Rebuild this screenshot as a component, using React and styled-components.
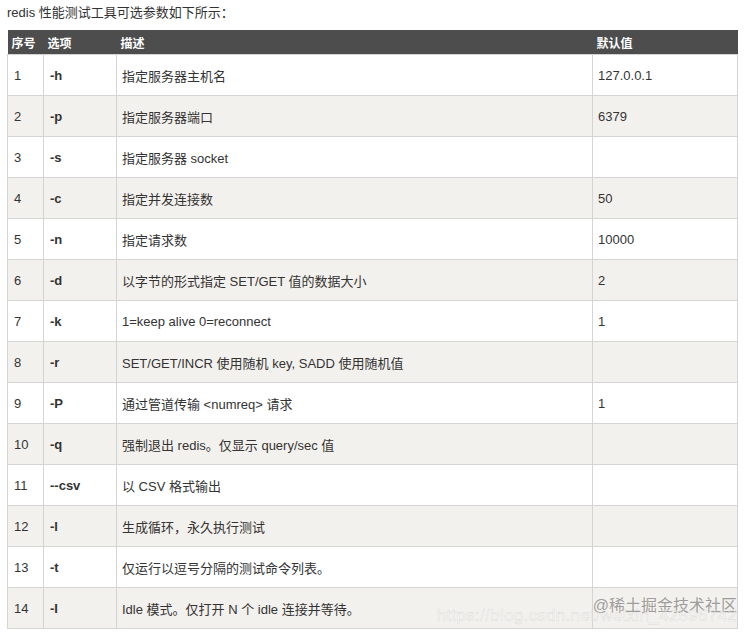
import React from "react";
import styled, { createGlobalStyle } from "styled-components";

const GlobalStyle = createGlobalStyle`
  body {
    margin: 0;
    background: #fff;
    font-family: "Liberation Sans", Arial, "Noto Sans CJK SC", sans-serif;
    color: #333;
  }
`;

const Page = styled.div`
  position: relative;
  padding: 0 9px 0 7px;
`;

const Title = styled.p`
  margin: 0 0 4px;
  line-height: 26px;
  font-size: 13px;
  color: #333;
`;

const Table = styled.table`
  width: 730px;
  border-collapse: collapse;
  table-layout: fixed;
  font-size: 13px;
`;

const Col = styled.col`
  width: ${(p) => p.w}px;
`;

const HeadCell = styled.th`
  background: #4d4d4d;
  color: #fff;
  font-weight: bold;
  font-size: 12px;
  text-align: left;
  height: 24px;
  padding: 0 4px;
`;

const Row = styled.tr`
  background: ${(p) => (p.alt ? "#f3f1ed" : "#fff")};
`;

const Cell = styled.td`
  border: 1px solid #d4d4d4;
  height: 40px;
  padding: 0 ${(p) => (p.tight ? 5 : 6)}px;
  color: #333;
  font-weight: ${(p) => (p.bold ? "bold" : "normal")};
  white-space: nowrap;
`;

const Watermark = styled.div`
  position: absolute;
  right: 9px;
  top: 596px;
  text-align: right;
  pointer-events: none;
`;

const Brand = styled.div`
  font-size: 16px;
  line-height: 20px;
  color: rgba(120, 120, 120, 0.7);
`;

const Url = styled.div`
  margin-top: -9px;
  font-size: 17px;
  line-height: 18px;
  color: rgba(255, 255, 255, 0.4);
  -webkit-text-stroke: 0.5px rgba(160, 160, 160, 0.3);
  letter-spacing: 0.3px;
`;

const rows = [
  ["1", "-h", "指定服务器主机名", "127.0.0.1"],
  ["2", "-p", "指定服务器端口", "6379"],
  ["3", "-s", "指定服务器 socket", ""],
  ["4", "-c", "指定并发连接数", "50"],
  ["5", "-n", "指定请求数", "10000"],
  ["6", "-d", "以字节的形式指定 SET/GET 值的数据大小", "2"],
  ["7", "-k", "1=keep alive 0=reconnect", "1"],
  ["8", "-r", "SET/GET/INCR 使用随机 key, SADD 使用随机值", ""],
  ["9", "-P", "通过管道传输 <numreq> 请求", "1"],
  ["10", "-q", "强制退出 redis。仅显示 query/sec 值", ""],
  ["11", "--csv", "以 CSV 格式输出", ""],
  ["12", "-l", "生成循环，永久执行测试", ""],
  ["13", "-t", "仅运行以逗号分隔的测试命令列表。", ""],
  ["14", "-I", "Idle 模式。仅打开 N 个 idle 连接并等待。", ""],
];

export default function App() {
  return (
    <Page>
      <GlobalStyle />
      <Title>redis 性能测试工具可选参数如下所示：</Title>
      <Table>
        <colgroup>
          <Col w={36} />
          <Col w={73} />
          <Col w={476} />
          <Col w={145} />
        </colgroup>
        <thead>
          <tr>
            <HeadCell>序号</HeadCell>
            <HeadCell>选项</HeadCell>
            <HeadCell>描述</HeadCell>
            <HeadCell>默认值</HeadCell>
          </tr>
        </thead>
        <tbody>
          {rows.map((r, i) => (
            <Row key={r[0]} alt={i % 2 === 1}>
              <Cell>{r[0]}</Cell>
              <Cell bold>{r[1]}</Cell>
              <Cell tight>{r[2]}</Cell>
              <Cell tight>{r[3]}</Cell>
            </Row>
          ))}
        </tbody>
      </Table>
      <Watermark>
        <Brand>@稀土掘金技术社区</Brand>
        <Url>https://blog.csdn.net/weixin_42596742</Url>
      </Watermark>
    </Page>
  );
}
